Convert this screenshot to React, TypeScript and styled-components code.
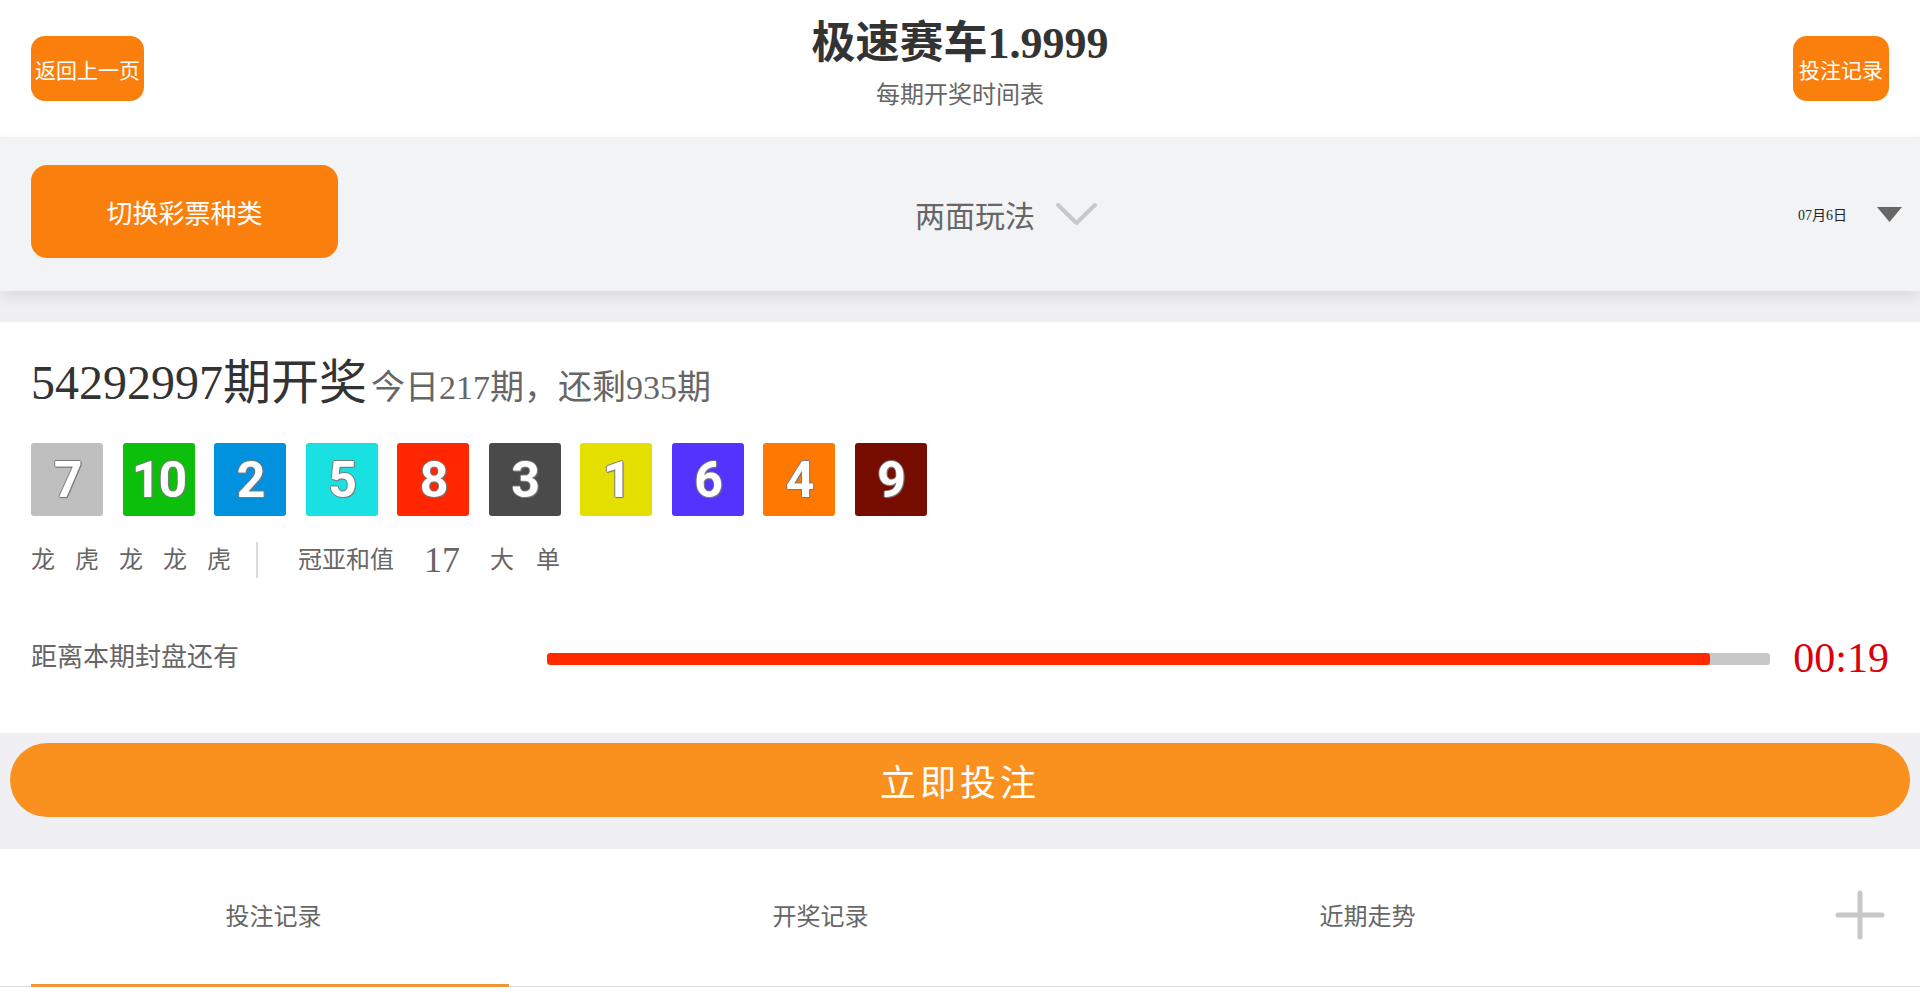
import styled, { createGlobalStyle } from 'styled-components';

const GlobalStyle = createGlobalStyle`
  html, body {
    margin: 0;
    padding: 0;
    background: #efeff4;
  }
  body {
    font-family: 'Liberation Serif', 'Noto Sans CJK SC', serif;
    width: 1920px;
    height: 993px;
    overflow: hidden;
  }
  * {
    box-sizing: border-box;
  }
`;

const ORANGE = '#fb7f0c';

const Page = styled.div`
  width: 1920px;
  min-height: 993px;
  background: #efeff4;
`;

const Header = styled.header`
  height: 137px;
  background: #fff;
  display: grid;
  grid-template-columns: 1fr auto 1fr;
  align-items: center;
  padding: 0 31px;
`;

const HeaderButton = styled.button<{ $w: number; $end?: boolean }>`
  justify-self: ${({ $end }) => ($end ? 'end' : 'start')};
  width: ${({ $w }) => $w}px;
  height: 65px;
  padding: 0;
  border: 0;
  border-radius: 14px;
  background: ${ORANGE};
  color: #fff;
  font-family: inherit;
  font-size: 21px;
  white-space: nowrap;
`;

const TitleBlock = styled.div`
  align-self: stretch;
  display: flex;
  flex-direction: column;
  align-items: center;
  padding-top: 18px;
`;

const Title = styled.div`
  font-size: 44px;
  line-height: 52px;
  font-weight: 700;
  color: #333;
  white-space: nowrap;
`;

const SubTitle = styled.div`
  margin-top: 8px;
  font-size: 24px;
  line-height: 34px;
  color: #666;
`;

const Bar = styled.div`
  position: relative;
  z-index: 1;
  height: 154px;
  margin-bottom: 31px;
  background: #f2f3f5;
  display: grid;
  grid-template-columns: 1fr auto 1fr;
  align-items: center;
  padding: 0 18px 0 31px;
  box-shadow: 0 6px 14px rgba(0, 0, 0, 0.09);
`;

const BarButton = styled.button`
  justify-self: start;
  align-self: start;
  margin-top: 28px;
  width: 307px;
  height: 93px;
  border: 0;
  border-radius: 16px;
  background: ${ORANGE};
  color: #fff;
  font-family: inherit;
  font-size: 26px;
`;

const PlaySelect = styled.div`
  display: flex;
  align-items: center;
  gap: 20px;
  margin-left: 80px;
  font-size: 30px;
  color: #666;
`;

const DateSelect = styled.div`
  justify-self: end;
  display: flex;
  align-items: center;
  gap: 30px;
  font-size: 14px;
  color: #222;
`;

const Content = styled.section`
  background: #fff;
  padding: 32px 31px 50px;
`;

const PeriodLine = styled.div`
  height: 58px;
  font-size: 48px;
  line-height: 58px;
  color: #333;
  white-space: nowrap;
`;

const PeriodInfo = styled.span`
  margin-left: 4px;
  font-size: 34px;
  color: #666;
`;

const BallRow = styled.div`
  display: flex;
  gap: 19.5px;
  margin-top: 31px;
`;

const Ball = styled.div<{ $bg: string }>`
  width: 72px;
  height: 73px;
  border-radius: 3px;
  background: ${({ $bg }) => $bg};
  display: flex;
  align-items: center;
  justify-content: center;
  font-family: Roboto, 'Open Sans', sans-serif;
  font-weight: 700;
  font-size: 50px;
  letter-spacing: -2px;
  color: #fff;
  text-shadow: 1px 0 0 #7a7a7a, -1px 0 0 #7a7a7a, 0 1px 0 #7a7a7a, 0 -1px 0 #7a7a7a,
    1px 1px 1px #7a7a7a;
`;

const StatsRow = styled.div`
  display: flex;
  align-items: center;
  height: 36px;
  margin-top: 26px;
  font-size: 24px;
  line-height: 36px;
  color: #666;
`;

const StatGroup = styled.div<{ $gap: number }>`
  display: flex;
  align-items: center;
  gap: ${({ $gap }) => $gap}px;
`;

const Divider = styled.div`
  width: 2px;
  height: 36px;
  margin: 0 40px 0 25px;
  background: #dcdcdc;
`;

const SumValue = styled.span`
  margin: 0 30px 0 30px;
  font-size: 36px;
`;

const CountdownRow = styled.div`
  display: grid;
  grid-template-columns: 516px 1fr auto;
  align-items: center;
  height: 50px;
  margin-top: 55px;
`;

const CountdownLabel = styled.div`
  font-size: 26px;
  line-height: 34px;
  color: #666;
  margin-top: -1px;
`;

const Track = styled.div`
  height: 12px;
  margin-top: 2px;
  border-radius: 3px;
  background: #c8c8c8;
  overflow: hidden;
`;

const Fill = styled.div`
  height: 100%;
  border-radius: 3px;
  background: #ff2a00;
`;

const Time = styled.div`
  margin-left: 23px;
  font-size: 42px;
  line-height: 50px;
  color: #d9000b;
`;

const ActionArea = styled.div`
  padding: 10px 10px 32px;
`;

const BetButton = styled.button`
  width: 100%;
  height: 74px;
  border: 0;
  border-radius: 37px;
  background: #fa911e;
  color: #fff;
  font-family: inherit;
  font-size: 36px;
  letter-spacing: 4px;
`;

const TabBar = styled.nav`
  background: #fff;
  padding-bottom: 6px;
`;

const TabList = styled.div`
  display: flex;
  height: 138px;
  border-bottom: 1px solid #dcdcdc;
`;

const Tab = styled.div<{ $active?: boolean }>`
  position: relative;
  width: 547px;
  display: flex;
  align-items: center;
  justify-content: center;
  padding-bottom: 6px;
  font-size: 24px;
  color: #666;

  &::after {
    content: '';
    display: ${({ $active }) => ($active ? 'block' : 'none')};
    position: absolute;
    left: 31px;
    width: 478px;
    bottom: -1px;
    height: 3px;
    background: #f0963a;
  }
`;

const PlusCell = styled.div`
  flex: 1;
  display: flex;
  align-items: center;
  justify-content: flex-end;
  padding: 0 35px 6px 0;
`;

const balls = [
  { n: 7, c: '#bfbfbf' },
  { n: 10, c: '#0bbf0b' },
  { n: 2, c: '#0091df' },
  { n: 5, c: '#1ae1e1' },
  { n: 8, c: '#ff2600' },
  { n: 3, c: '#4a4a4a' },
  { n: 1, c: '#e5df00' },
  { n: 6, c: '#5533ff' },
  { n: 4, c: '#ff7800' },
  { n: 9, c: '#770c00' },
];

const dragonTiger = ['龙', '虎', '龙', '龙', '虎'];

export default function App() {
  const progress = 95.1;
  return (
    <Page>
      <GlobalStyle />
      <Header>
        <HeaderButton $w={113}>返回上一页</HeaderButton>
        <TitleBlock>
          <Title>极速赛车1.9999</Title>
          <SubTitle>每期开奖时间表</SubTitle>
        </TitleBlock>
        <HeaderButton $w={96} $end>
          投注记录
        </HeaderButton>
      </Header>

      <Bar>
        <BarButton>切换彩票种类</BarButton>
        <PlaySelect>
          两面玩法
          <svg width="43" height="24" viewBox="0 0 43 24">
            <polyline
              points="3,3 21.5,21 40,3"
              fill="none"
              stroke="#c8c8c8"
              strokeWidth="4"
              strokeLinecap="round"
              strokeLinejoin="round"
            />
          </svg>
        </PlaySelect>
        <DateSelect>
          <span>07月6日</span>
          <svg width="25" height="15" viewBox="0 0 25 15">
            <polygon points="0,0 25,0 12.5,15" fill="#666" />
          </svg>
        </DateSelect>
      </Bar>

      <Content>
        <PeriodLine>
          54292997期开奖
          <PeriodInfo>今日217期，还剩935期</PeriodInfo>
        </PeriodLine>

        <BallRow>
          {balls.map((b) => (
            <Ball key={b.n} $bg={b.c}>
              {b.n}
            </Ball>
          ))}
        </BallRow>

        <StatsRow>
          <StatGroup $gap={20}>
            {dragonTiger.map((t, i) => (
              <span key={i}>{t}</span>
            ))}
          </StatGroup>
          <Divider />
          <span>冠亚和值</span>
          <SumValue>17</SumValue>
          <StatGroup $gap={22}>
            <span>大</span>
            <span>单</span>
          </StatGroup>
        </StatsRow>

        <CountdownRow>
          <CountdownLabel>距离本期封盘还有</CountdownLabel>
          <Track>
            <Fill style={{ width: `${progress}%` }} />
          </Track>
          <Time>00:19</Time>
        </CountdownRow>
      </Content>

      <ActionArea>
        <BetButton>立即投注</BetButton>
      </ActionArea>

      <TabBar>
        <TabList>
          <Tab $active>投注记录</Tab>
          <Tab>开奖记录</Tab>
          <Tab>近期走势</Tab>
          <PlusCell>
            <svg width="50" height="50" viewBox="0 0 50 50">
              <line x1="25" y1="3" x2="25" y2="47" stroke="#c8c8c8" strokeWidth="5" strokeLinecap="round" />
              <line x1="3" y1="25" x2="47" y2="25" stroke="#c8c8c8" strokeWidth="5" strokeLinecap="round" />
            </svg>
          </PlusCell>
        </TabList>
      </TabBar>
    </Page>
  );
}
